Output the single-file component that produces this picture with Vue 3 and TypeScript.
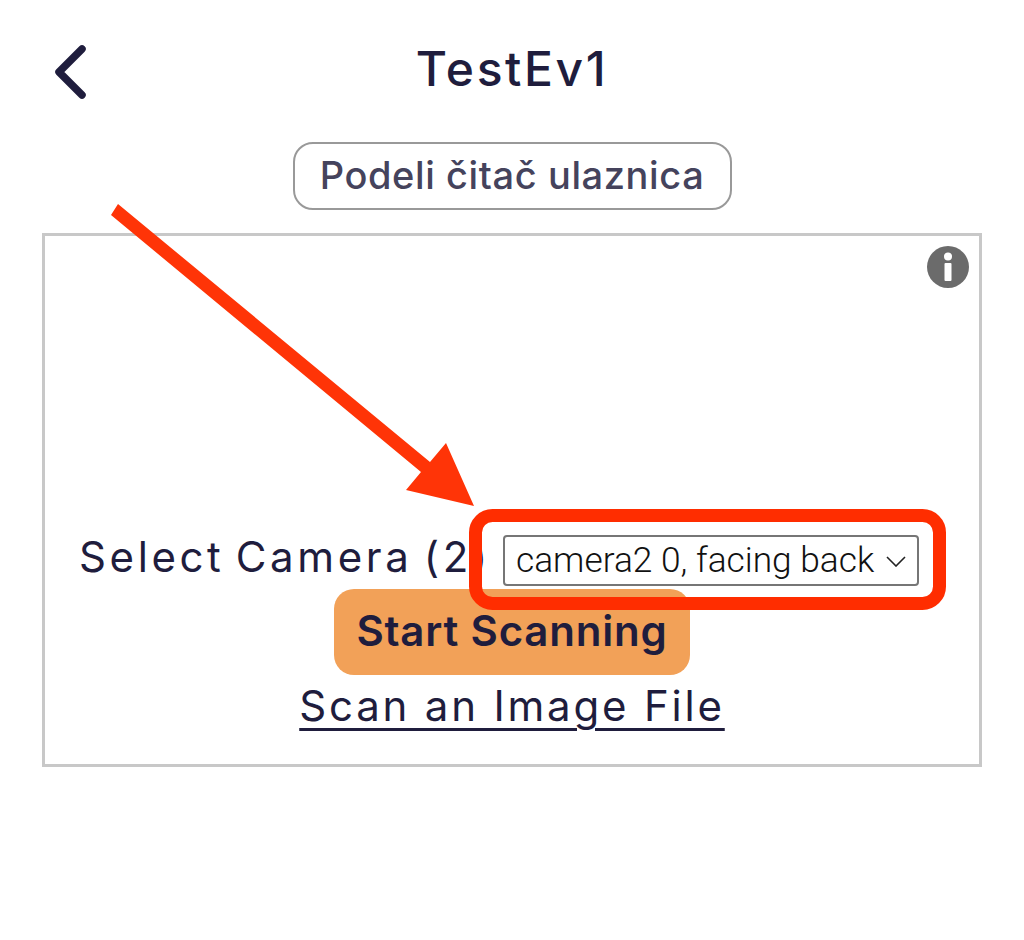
<script setup lang="ts">
import { ref } from "vue";

const eventName = ref("TestEv1");
const camera = ref("camera2 0, facing back");
const cameras = ["camera2 0, facing back", "camera2 1, facing front"];
</script>

<template>
  <div class="page">
    <header class="top">
      <button class="back" aria-label="Back">
        <svg width="36" height="56" viewBox="0 0 36 56">
          <path d="M30 5 L7 28 L30 51" fill="none" stroke="#1f1d3d" stroke-width="7.5" stroke-linecap="round" stroke-linejoin="round" />
        </svg>
      </button>
      <h1>{{ eventName }}</h1>
    </header>

    <div class="share-row">
      <button class="share">Podeli čitač ulaznica</button>
    </div>

    <section class="reader">
      <svg class="info" width="42" height="42" viewBox="0 0 42 42">
        <circle cx="21" cy="21" r="21" fill="#6b6b6b" />
        <circle cx="21" cy="10.5" r="4" fill="#fff" />
        <rect x="17.5" y="17" width="7" height="18" rx="1" fill="#fff" />
      </svg>
      <div class="camera-row">
        <span class="camera-label">Select Camera (2)</span>
        <div class="select-wrap">
          <select v-model="camera">
            <option v-for="c in cameras" :key="c" :value="c">{{ c }}</option>
          </select>
          <svg class="chevron" width="20" height="11" viewBox="0 0 20 11">
            <path d="M1 1 L10 10 L19 1" fill="none" stroke="#222" stroke-width="1.6" />
          </svg>
        </div>
      </div>
      <button class="start">Start Scanning</button>
      <a class="scan-file" href="#">Scan an Image File</a>
    </section>

    <!-- red markup drawn on top of the screenshot -->
    <svg class="markup" width="1024" height="940" viewBox="0 0 1024 940">
      <polygon points="118,204 430,462 446,443 474,506 406,490 421,472 111,215" fill="#ff3407" />
      <rect x="475.5" y="515.5" width="464" height="88" rx="17" fill="none" stroke="#ff2d00" stroke-width="13" />
    </svg>
  </div>
</template>

<style>
body {
  background: #fff;
}
</style>

<style scoped>
.page {
  position: relative;
  width: 1024px;
  height: 940px;
  overflow: hidden;
  background: #fff;
  font-family: Inter, "Open Sans", sans-serif;
  color: #1f1d3d;
}

.top {
  position: relative;
  display: flex;
  justify-content: center;
  align-items: center;
  height: 74px;
  margin-top: 31px;
}

.top h1 {
  margin: 0;
  font-size: 48px;
  font-weight: 500;
  letter-spacing: 2.6px;
  color: #1f1d3d;
}

.back {
  position: absolute;
  left: 52px;
  top: 13px;
  padding: 0;
  border: 0;
  background: none;
  line-height: 0;
}

.share-row {
  display: flex;
  justify-content: center;
  margin-top: 37px;
}

.share {
  width: 439px;
  height: 68px;
  box-sizing: border-box;
  border: 2px solid #999;
  border-radius: 20px;
  background: #fff;
  font-family: inherit;
  font-size: 38px;
  font-weight: 500;
  letter-spacing: 0.6px;
  color: #45435c;
  white-space: nowrap;
  padding: 0 0 2px;
}

.reader {
  position: relative;
  display: flex;
  flex-direction: column;
  align-items: center;
  justify-content: flex-end;
  box-sizing: border-box;
  width: 940px;
  height: 534px;
  margin: 23px 0 0 42px;
  padding-bottom: 30px;
  border: 3px solid #c8c8c8;
}

.info {
  position: absolute;
  top: 10px;
  right: 10px;
}

.camera-row {
  display: flex;
  align-items: center;
  align-self: flex-start;
  margin-left: 34px;
  height: 52px;
}

.camera-label {
  width: 424px;
  padding-bottom: 8px;
  font-size: 42px;
  font-weight: 400;
  letter-spacing: 3.6px;
  word-spacing: -4px;
  white-space: nowrap;
}

.select-wrap {
  position: relative;
  line-height: 0;
}

select {
  appearance: none;
  width: 416px;
  height: 51px;
  box-sizing: border-box;
  padding: 0 0 0 11px;
  border: 2px solid #767676;
  border-radius: 4px;
  background: #fff;
  font-family: Roboto, sans-serif;
  font-size: 35.3px;
  font-weight: 300;
  color: #111;
}

.chevron {
  position: absolute;
  right: 13px;
  top: 21px;
  pointer-events: none;
}

.start {
  width: 356px;
  height: 86px;
  margin-top: 3px;
  padding: 0 0 4px;
  border: 0;
  border-radius: 20px;
  background: #f2a158;
  font-family: inherit;
  font-size: 42px;
  font-weight: 600;
  letter-spacing: 0.8px;
  color: #1f1d3d;
  white-space: nowrap;
}

.scan-file {
  margin-top: 3px;
  font-size: 42px;
  letter-spacing: 2.8px;
  line-height: 56px;
  color: #1f1d3d;
  text-decoration: underline;
  text-decoration-thickness: 3px;
  text-underline-offset: 7px;
  white-space: nowrap;
}

.markup {
  position: absolute;
  left: 0;
  top: 0;
  pointer-events: none;
}
</style>
